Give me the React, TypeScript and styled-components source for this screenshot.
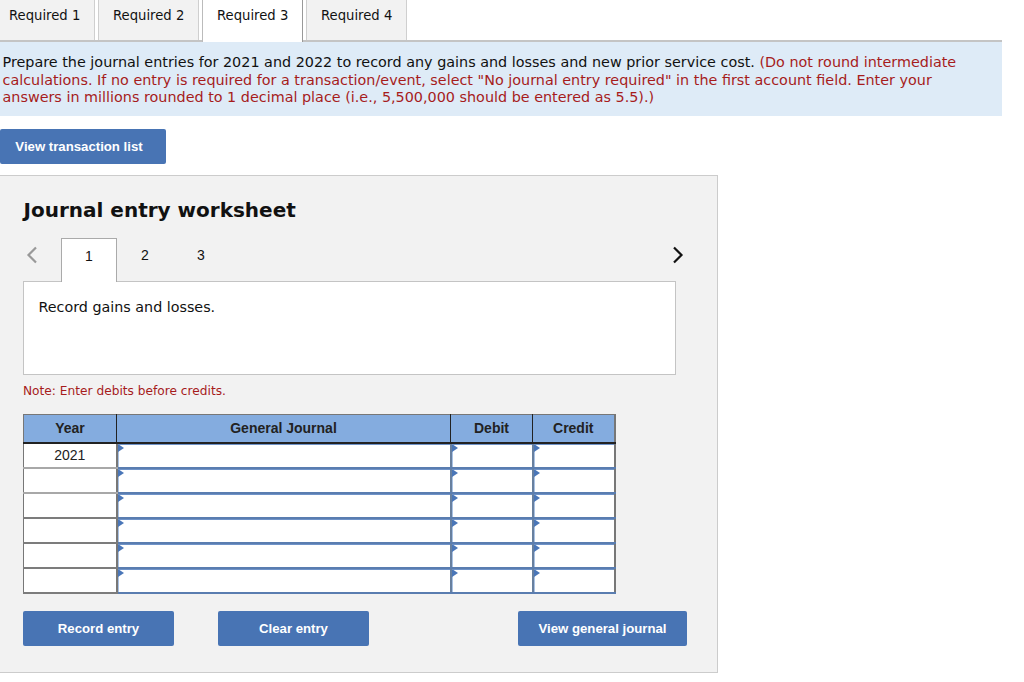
import React from "react";
import styled, { createGlobalStyle } from "styled-components";

const GlobalStyle = createGlobalStyle`
  html, body {
    margin: 0;
    padding: 0;
    background: #fff;
    overflow: hidden;
  }
  body {
    font-family: "DejaVu Sans", Verdana, sans-serif;
    color: #000;
  }
`;

const Page = styled.div`
  width: 1024px;
  height: 682px;
  overflow: hidden;
`;

const TabBar = styled.div`
  display: flex;
  gap: 3px;
  width: 1002px;
  height: 42px;
  box-sizing: border-box;
  border-bottom: 2px solid #c4c4c4;
`;

const Tab = styled.div<{ $active?: boolean; $first?: boolean }>`
  box-sizing: border-box;
  width: ${(p) => (p.$first ? "95px" : "101px")};
  height: ${(p) => (p.$active ? "42px" : "40px")};
  display: flex;
  align-items: flex-start;
  padding: 8px 0 0 ${(p) => (p.$first ? "9px" : "14px")};
  font-size: 13.2px;
  line-height: 16px;
  color: #111;
  background: ${(p) => (p.$active ? "#fff" : "#f2f2f2")};
  border-right: 1px solid ${(p) => (p.$active ? "#999" : "#cfcfcf")};
  border-left: ${(p) => (p.$first ? "none" : `1px solid ${p.$active ? "#bbb" : "#cfcfcf"}`)};
`;

const Banner = styled.div`
  box-sizing: border-box;
  width: 1002px;
  height: 74px;
  background: #deebf7;
  padding: 12px 40px 0 2.5px;
  font-size: 14.36px;
  line-height: 17.5px;
  color: #111;
`;

const Warning = styled.span`
  color: #a61c1c;
`;

const ActionButton = styled.button<{ $width: number }>`
  box-sizing: border-box;
  width: ${(p) => p.$width}px;
  height: 35px;
  border: none;
  border-radius: 2px;
  padding: 0;
  background: #4874b4;
  color: #fff;
  font-family: "Liberation Sans", Arial, sans-serif;
  font-size: 13.2px;
  font-weight: 700;
  text-align: center;
`;

const ListButton = styled(ActionButton)`
  display: block;
  margin-top: 13px;
  padding-right: 8px;
`;

const Panel = styled.section`
  box-sizing: border-box;
  width: 718px;
  height: 498px;
  margin-top: 11px;
  padding: 22px 0 0 23px;
  background: #f2f2f2;
  border: 1px solid #cccccc;
  border-left: none;
`;

const Title = styled.h2`
  margin: 0;
  padding-left: 0.5px;
  font-size: 20px;
  line-height: 25px;
  font-weight: 700;
  color: #111;
`;

const Pager = styled.div`
  display: flex;
  align-items: stretch;
  height: 44px;
  width: 652px;
  margin-top: 15px;
  position: relative;
  z-index: 1;
  margin-bottom: -1px;
`;

const Chevron = styled.svg`
  display: block;
`;

const ChevronSlot = styled.div<{ $right?: boolean }>`
  width: 38px;
  display: flex;
  align-items: center;
  padding: 0 0 11px 3px;
  box-sizing: border-box;
  margin-left: ${(p) => (p.$right ? "auto" : "0")};
  margin-right: ${(p) => (p.$right ? "-9px" : "0")};
  justify-content: ${(p) => (p.$right ? "flex-end" : "flex-start")};
`;

const PageTab = styled.div<{ $active?: boolean }>`
  box-sizing: border-box;
  width: 56px;
  padding-top: 8px;
  text-align: center;
  font-family: "Liberation Sans", Arial, sans-serif;
  font-size: 14px;
  line-height: 18px;
  color: #111;
  background: ${(p) => (p.$active ? "#fff" : "transparent")};
  border: ${(p) => (p.$active ? "1px solid #aaa" : "none")};
  border-bottom: none;
`;

const Prompt = styled.div`
  box-sizing: border-box;
  width: 653px;
  height: 94px;
  padding: 16px 14.5px;
  background: #fff;
  border: 1px solid #c4c4c4;
  font-size: 14.3px;
  line-height: 18px;
  color: #111;
`;

const Note = styled.p`
  margin: 9px 0 0;
  font-size: 12.2px;
  line-height: 14px;
  color: #a61c1c;
`;

const Table = styled.table`
  margin-top: 16px;
  width: 591px;
  table-layout: fixed;
  border-collapse: collapse;
  border: 1px solid #777;
  border-width: 1px 2px 2px 1px;
  font-family: "Liberation Sans", Arial, sans-serif;
  font-size: 14px;
  color: #222;
`;

const Head = styled.th<{ $width: number }>`
  box-sizing: border-box;
  width: ${(p) => p.$width}px;
  height: 28px;
  padding: 0;
  background: #84acdf;
  border-right: 1px solid #222;
  border-bottom: 2px solid #222;
  font-weight: 700;

  &:last-child {
    border-right: none;
  }
`;

const Row = styled.tr`
  height: 25px;
`;

const YearCell = styled.td<{ $light?: boolean }>`
  box-sizing: border-box;
  height: 25px;
  padding: 0;
  text-align: center;
  background: #fff;
  border-bottom: 2px solid ${(p) => (p.$light ? "#a8a8a8" : "#7c7c7c")};
  border-right: 2px solid #777;
`;

const EntryCell = styled.td`
  box-sizing: border-box;
  height: 25px;
  padding: 0;
  position: relative;
  background: #fff;
  border-right: 2px solid #68809f;
  border-bottom: 2px solid #5a7db0;
  box-shadow: inset 1px 0 0 #a9c2e4, inset 0 1px 0 #6f93c8;

  &:last-child {
    border-right: none;
  }

  &::before {
    content: "";
    position: absolute;
    left: 0;
    top: 0;
    border-style: solid;
    border-width: 4.5px 0 4.5px 6px;
    border-color: transparent transparent transparent #4a76b8;
  }
`;

const Footer = styled.div`
  display: flex;
  width: 664px;
  margin-top: 17px;
`;

const Spacer = styled.div<{ $width: number }>`
  flex: 0 0 ${(p) => p.$width}px;
`;

const rows = ["2021", "", "", "", "", ""];

export default function App() {
  return (
    <Page>
      <GlobalStyle />
      <TabBar>
        <Tab $first>Required 1</Tab>
        <Tab>Required 2</Tab>
        <Tab $active>Required 3</Tab>
        <Tab>Required 4</Tab>
      </TabBar>
      <Banner>
        Prepare the journal entries for 2021 and 2022 to record any gains and losses and new prior service cost.{" "}
        <Warning>
          (Do not round intermediate calculations. If no entry is required for a transaction/event, select "No journal
          entry required" in the first account field. Enter your answers in millions rounded to 1 decimal place (i.e.,
          5,500,000 should be entered as 5.5).)
        </Warning>
      </Banner>
      <ListButton $width={166}>View transaction list</ListButton>
      <Panel>
        <Title>Journal entry worksheet</Title>
        <Pager>
          <ChevronSlot>
            <Chevron width="12" height="18" viewBox="0 0 12 18" fill="none" stroke="#999" strokeWidth="2.2">
              <path d="M10 1.5 2.5 9l7.5 7.5" />
            </Chevron>
          </ChevronSlot>
          <PageTab $active>1</PageTab>
          <PageTab>2</PageTab>
          <PageTab>3</PageTab>
          <ChevronSlot $right>
            <Chevron width="12" height="18" viewBox="0 0 12 18" fill="none" stroke="#111" strokeWidth="2.2">
              <path d="M2 1.5 9.5 9 2 16.5" />
            </Chevron>
          </ChevronSlot>
        </Pager>
        <Prompt>Record gains and losses.</Prompt>
        <Note>Note: Enter debits before credits.</Note>
        <Table>
          <thead>
            <tr>
              <Head $width={93}>Year</Head>
              <Head $width={334}>General Journal</Head>
              <Head $width={82}>Debit</Head>
              <Head $width={82}>Credit</Head>
            </tr>
          </thead>
          <tbody>
            {rows.map((year, idx) => (
              <Row key={idx}>
                <YearCell $light={idx < 2}>{year}</YearCell>
                <EntryCell />
                <EntryCell />
                <EntryCell />
              </Row>
            ))}
          </tbody>
        </Table>
        <Footer>
          <ActionButton $width={151}>Record entry</ActionButton>
          <Spacer $width={44} />
          <ActionButton $width={151}>Clear entry</ActionButton>
          <Spacer $width={149} />
          <ActionButton $width={169}>View general journal</ActionButton>
        </Footer>
      </Panel>
    </Page>
  );
}
